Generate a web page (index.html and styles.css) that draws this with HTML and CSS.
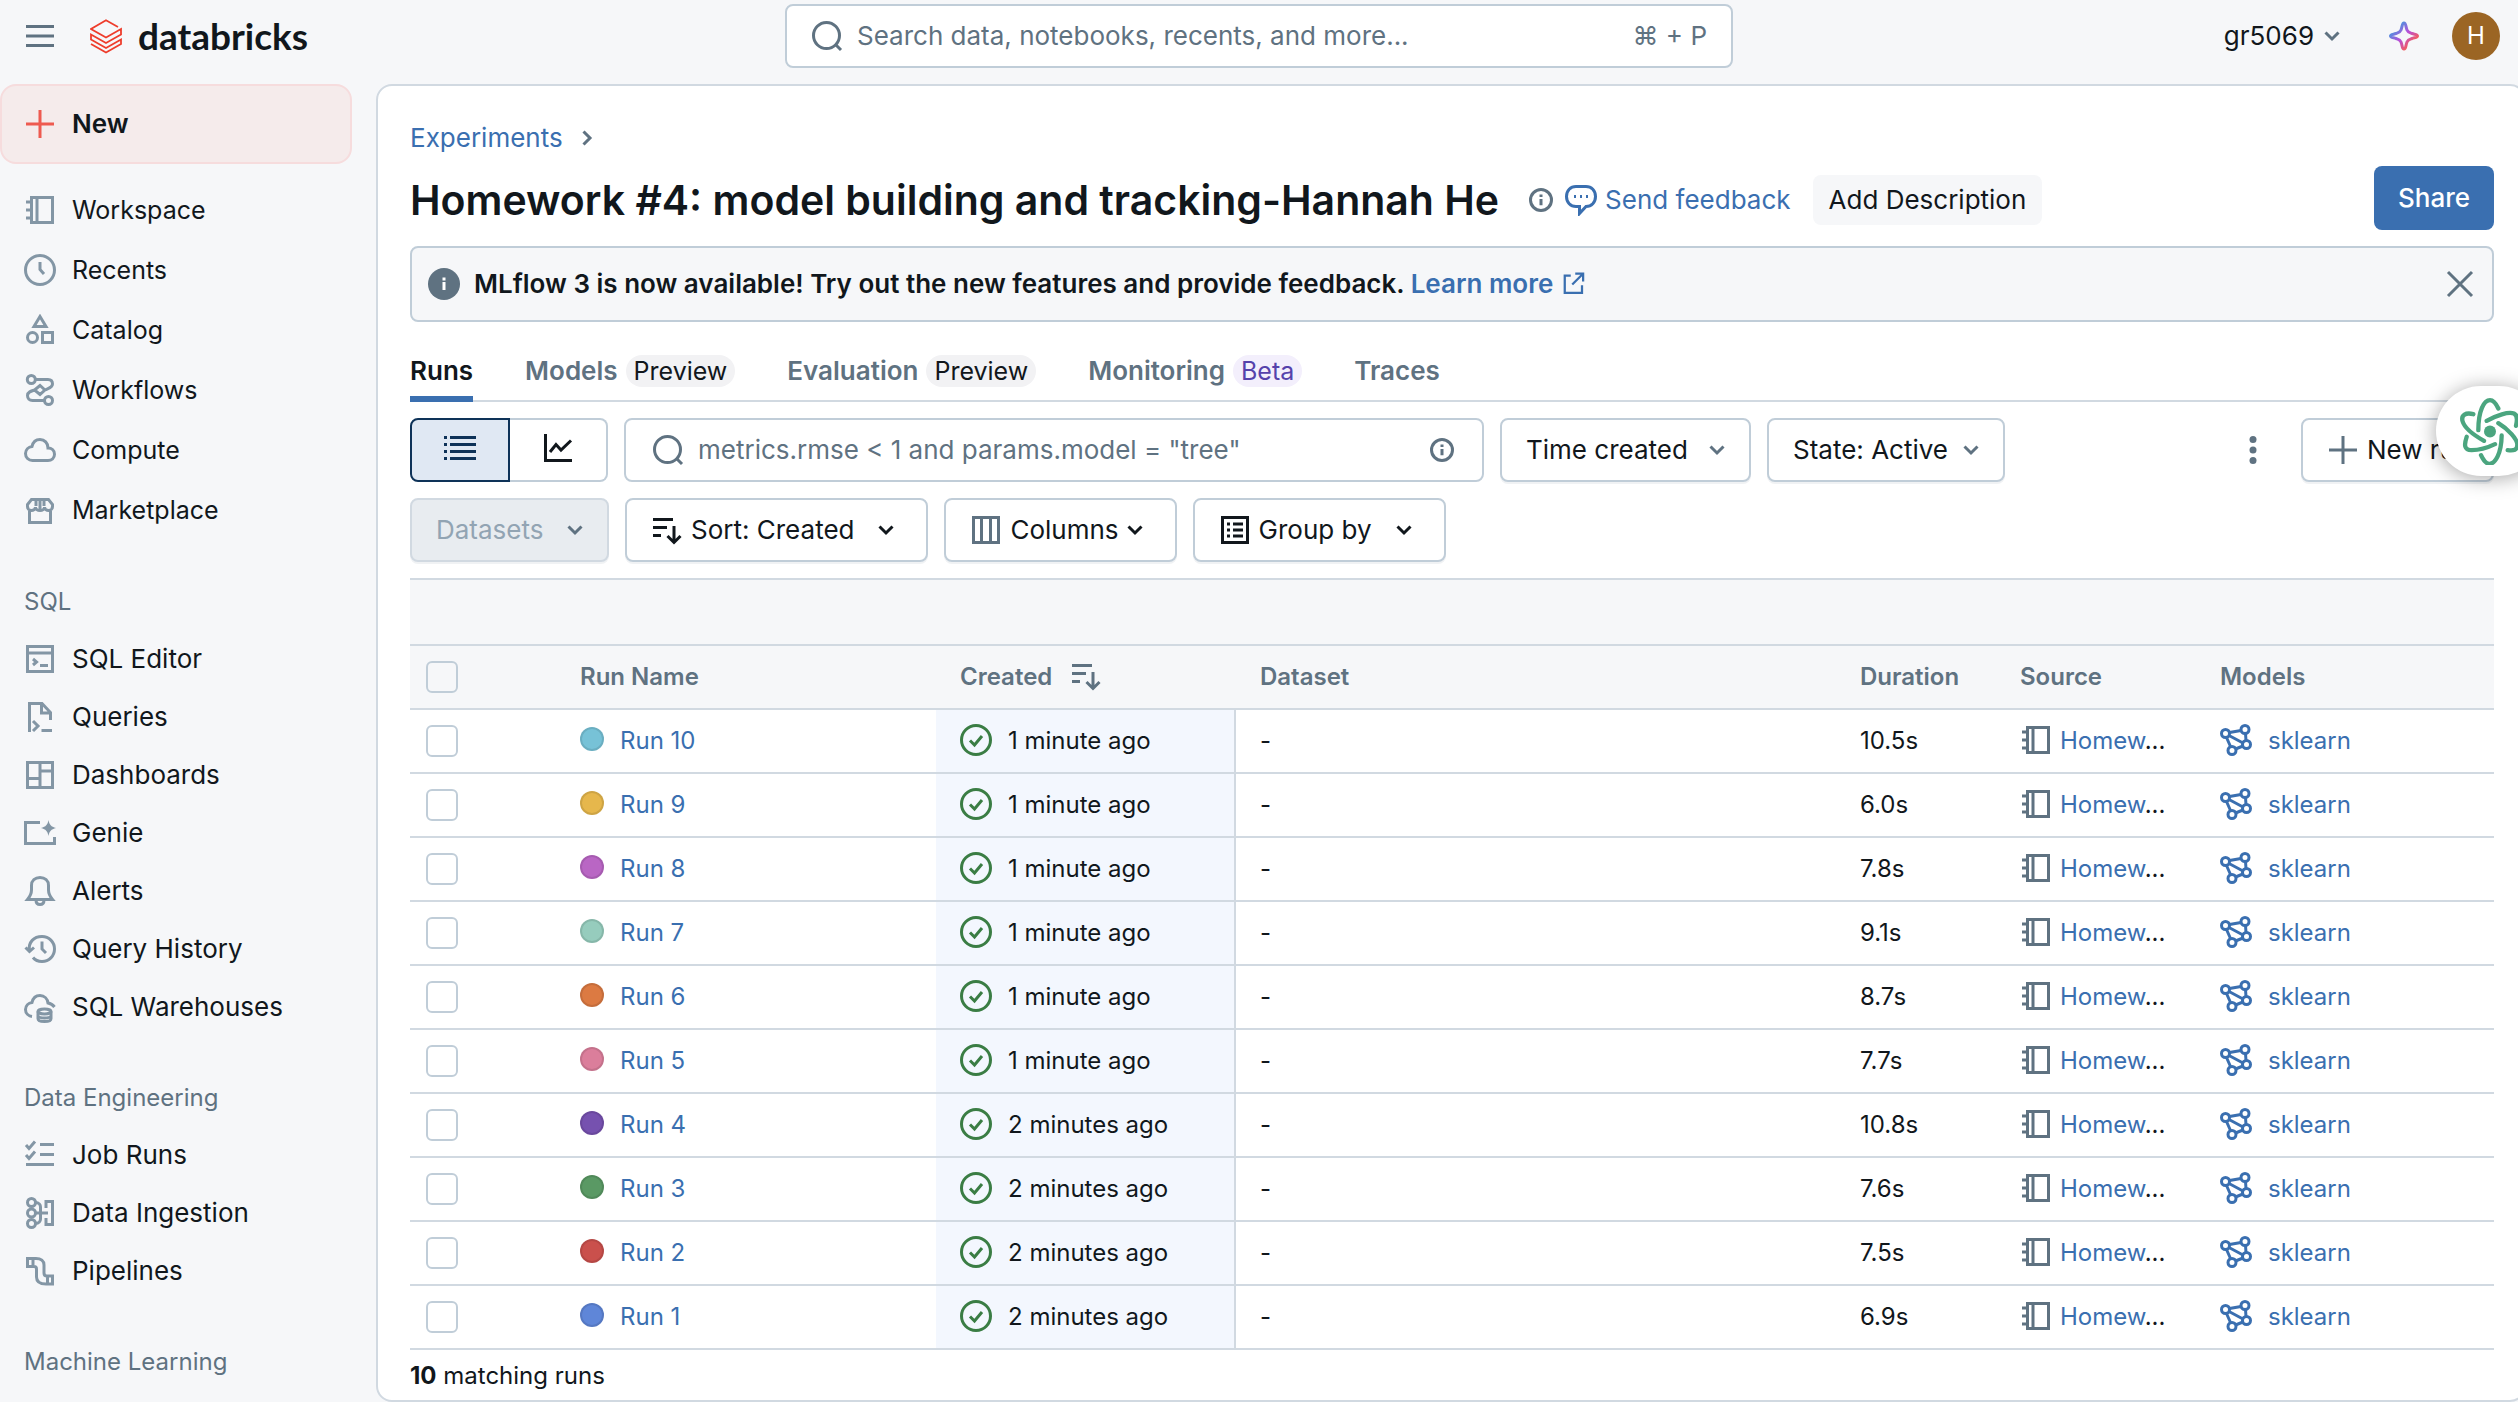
FILE: index.html
```html
<!DOCTYPE html>
<html lang="en">
<head>
<meta charset="utf-8">
<title>Homework #4: model building and tracking-Hannah He - Databricks</title>
<meta name="viewport" content="width=device-width, initial-scale=1">
<link rel="stylesheet" href="styles.css">
</head>
<body>
<svg class="sprite" aria-hidden="true">
  <defs>
    <linearGradient id="spark-gradient" x1="0" y1="0" x2="1" y2="1">
      <stop offset="0.15" stop-color="#4299e0"/><stop offset="0.5" stop-color="#b84fd8"/><stop offset="0.85" stop-color="#ff5f46"/>
    </linearGradient>
  </defs>
  <symbol id="i-menu" viewBox="0 0 32 32"><path d="M2 6.500H30M2 16H30M2 25.500H30"/></symbol>
  <symbol id="i-plus" viewBox="0 0 32 32"><path d="M16 2V30M2 16H30"/></symbol>
  <symbol id="i-notebook" viewBox="0 0 32 32"><path d="M7.500 3.500H28.500V28.500H7.500ZM13 3.500V28.500M2 8H7M2 16H7M2 24H7"/></symbol>
  <symbol id="i-clock" viewBox="0 0 32 32"><circle cx="16" cy="16" r="14.500"/><path d="M16 8V15.500L20 20"/></symbol>
  <symbol id="i-shapes" viewBox="0 0 32 32"><path d="M16 2.500L22 12.500H10Z"/><circle cx="8.500" cy="23.500" r="5"/><path d="M18.500 18.500H28.500V28.500H18.500Z"/></symbol>
  <symbol id="i-flow" viewBox="0 0 32 32"><circle cx="7.300" cy="5.500" r="4"/><circle cx="24.500" cy="26.500" r="4"/><path d="M11.500 5.500H24C27.500 5.500 28.500 8 28.500 10C28.500 13.500 25 14 21 16L16 20.500L10.500 16L16 11.500L21 16M10.500 16C7 17 3.500 18 3.500 21.500C3.500 24.500 5.500 26.500 8.500 26.500H20.500"/></symbol>
  <symbol id="i-cloud" viewBox="0 0 32 32"><path d="M8 12.500C9 8 12 5.500 16 5.500C20.500 5.500 24 9 24 14C27.500 14 30.500 16.500 30.500 20.200C30.500 24 27.500 26.500 24 26.500H8.500C4.500 26.500 1.500 23.500 1.500 19.500C1.500 15.500 4.500 13 8 12.500Z"/></symbol>
  <symbol id="i-store" viewBox="0 0 32 32"><path d="M7.500 5.500H24.500L28.500 10.500V12.500C28.500 15 26.500 16.500 24.700 16.500C22.500 16.500 20.500 15 20.500 13C20.500 15 18.500 16.500 16 16.500C13.500 16.500 11.500 15 11.500 13C11.500 15 9.500 16.500 7.300 16.500C5.500 16.500 3.500 15 3.500 12.500V10.500ZM12 6V12M20 6V12M16 6V15M5.500 17V28.500H26.500V17"/></symbol>
  <symbol id="i-sqleditor" viewBox="0 0 32 32"><path d="M3.500 3.500H28.500V28.500H3.500ZM3.500 10H28.500M9 16L12.500 19L9 22M16 22.500H24"/></symbol>
  <symbol id="i-query" viewBox="0 0 32 32"><path d="M5.500 31V2.500H18L26.500 11.500V19M17.500 2.500V12H26.500M9 20L14 25L9 30M17.500 29.500H28"/></symbol>
  <symbol id="i-dashboard" viewBox="0 0 32 32"><path d="M3.500 3.500H28.500V28.500H3.500ZM16 3.500V28.500M16 12H28.500M3.500 19.500H16"/></symbol>
  <symbol id="i-genie" viewBox="0 0 32 32"><path d="M16 5.500H1.500V26.500H30.500V20"/><path class="solid" d="M24.500 3C25.500 8 27 9.500 32 11C27 12.500 25.500 14 24.500 19C23.500 14 22 12.500 17 11C22 9.500 23.500 8 24.500 3Z"/></symbol>
  <symbol id="i-bell" viewBox="0 0 32 32"><path d="M3.500 24.500C6 21.500 7.500 19 7.500 15V10.500C7.500 5.500 11 2.500 16 2.500C21 2.500 24.500 5.500 24.500 10.500V15C24.500 19 26 21.500 28.500 24.500ZM12 25C12 28 13.500 29.500 16 29.500C18.500 29.500 20 28 20 25"/></symbol>
  <symbol id="i-history" viewBox="0 0 32 32"><path d="M5.500 18C4 9 10 3.500 18 3.500C25 3.500 30.500 9 30.500 16C30.500 23 25 28.500 18 28.500C14 28.500 11 27 9 24.500M1.500 14.500L5.500 18.500L10 14.500M18 8.500V16L22 20"/></symbol>
  <symbol id="i-warehouse" viewBox="0 0 32 32"><path d="M8 25.500C4.500 25 1.500 22.500 1.500 18.500C1.500 14.500 4.500 12 8 11.500C9 7 12 4.500 16 4.500C20.500 4.500 23.500 8 24 12C27 12.500 29 14 30.500 16"/><ellipse cx="20.500" cy="20.500" rx="6.500" ry="2.500"/><path d="M14 20.500V27.500C14 31.500 27 31.500 27 27.500V20.500M14 25C15 27.500 26 27.500 27 25"/></symbol>
  <symbol id="i-jobs" viewBox="0 0 32 32"><path d="M2 6L5 9.500L11 2.500M2 16L5 19.500L11 12.500M16 5.500H30M16 15.500H30M2 25.500H30"/></symbol>
  <symbol id="i-ingest" viewBox="0 0 32 32"><circle cx="7.500" cy="5.500" r="4"/><circle cx="7.500" cy="16" r="4"/><circle cx="7.500" cy="26.500" r="4"/><path d="M11.500 5.500C15 5.500 16.500 8 16.500 10V22C16.500 24 15 26.500 11.500 26.500M11.500 16H24M22 11V4.500H28.500V27.500H22V21"/></symbol>
  <symbol id="i-pipeline" viewBox="0 0 32 32"><path d="M3.500 3.500H12C17 3.500 20 6 20 10V18C20 20 21 21 23 21H28.500V29H22C16.500 29 12.500 27 12.500 22V14C12.500 12 11.500 11.500 10 11.500H3.500ZM9 4V11.500M23.500 21V29"/></symbol>
  <symbol id="i-search" viewBox="0 0 32 32"><circle cx="15.500" cy="15.500" r="13"/><path d="M24.500 24.500L30 30"/></symbol>
  <symbol id="i-down" viewBox="0 0 16 16"><path d="M1.500 4.500L8 11L14.500 4.500"/></symbol>
  <symbol id="i-right" viewBox="0 0 16 16"><path d="M4.500 1.500L11 8L4.500 14.500"/></symbol>
  <symbol id="i-info" viewBox="0 0 32 32"><circle cx="16" cy="16" r="14"/><path d="M16 14.500V23M16 8.500V12"/></symbol>
  <symbol id="i-infofill" viewBox="0 0 32 32"><circle class="solid" cx="16" cy="16" r="16"/><path class="knock" d="M16 14V22M16 9.500V12.500"/></symbol>
  <symbol id="i-speech" viewBox="0 0 32 32"><path d="M11 2.500H21C26.500 2.500 30.500 6.500 30.500 12.500C30.500 18.500 26.500 22.500 21 22.500L14.500 29.500V22.500H11C5.500 22.500 1.500 18.500 1.500 12.500C1.500 6.500 5.500 2.500 11 2.500Z"/><path d="M9 12.500H11M15 12.500H17M21 12.500H23"/></symbol>
  <symbol id="i-external" viewBox="0 0 32 32"><path d="M13 6H5V29H28V19M19 3.500H29.500V14M29 4L15 18"/></symbol>
  <symbol id="i-close" viewBox="0 0 32 32"><path d="M4 4L28 28M28 4L4 28"/></symbol>
  <symbol id="i-list" viewBox="0 0 32 32"><path d="M0 3.500H3M6 3.500H32M0 10.500H3M6 10.500H32M0 17.500H3M6 17.500H32M0 24.500H3M6 24.500H32"/></symbol>
  <symbol id="i-chart" viewBox="0 0 32 32"><path d="M3.500 0V26.500H30M8 18L14 10.500L19 16L29 6.500"/></symbol>
  <symbol id="i-sort" viewBox="0 0 32 32"><path d="M2 5.500H22M2 13.500H16M2 21.500H10M23 12V28M16.500 22L23 28.500L29.500 22"/></symbol>
  <symbol id="i-columns" viewBox="0 0 32 32"><path d="M3.500 3.500H28.500V28.500H3.500ZM11.500 3.500V28.500M20.500 3.500V28.500"/></symbol>
  <symbol id="i-group" viewBox="0 0 32 32"><path d="M3.500 3.500H28.500V28.500H3.500ZM8 10H11M14 10H24M8 16H11M14 16H24M8 22H11M14 22H24"/></symbol>
  <symbol id="i-check" viewBox="0 0 32 32"><circle cx="16" cy="16" r="14.500"/><path d="M10 16.500L14.500 21L22 12"/></symbol>
  <symbol id="i-model" viewBox="0 0 32 32"><circle cx="5.500" cy="9.500" r="4"/><circle cx="25" cy="5.500" r="4"/><circle cx="26.500" cy="20.500" r="4"/><circle cx="12" cy="26.500" r="4"/><path d="M9.500 8.500L21 6.500M25.500 9.500L26 16.500M9 11.500L23 19M6.500 13.500L10.500 22.500M15.500 25L23 22"/></symbol>
  <symbol id="i-kebab" viewBox="0 0 32 32"><circle class="solid" cx="16" cy="5.500" r="3.500"/><circle class="solid" cx="16" cy="16" r="3.500"/><circle class="solid" cx="16" cy="26.500" r="3.500"/></symbol>
</svg>

<header class="topbar">
  <div class="topbar-start">
    <button class="plain" aria-label="Toggle navigation"><svg class="icon"><use href="#i-menu"/></svg></button>
    <a class="brand" href="#">
      <svg class="brand-mark" viewBox="0 0 32 35"><path d="M28 8L16 1.200L1 10L16 18.500L31 10V15.500L16 24L1 15.500V20.500L16 29L31 20.500V25L16 33.500L1 25"/></svg>
      <span>databricks</span>
    </a>
  </div>
  <label class="global-search">
    <svg class="icon"><use href="#i-search"/></svg>
    <input type="search" placeholder="Search data, notebooks, recents, and more..." aria-label="Search">
    <kbd>⌘ + P</kbd>
  </label>
  <div class="topbar-end">
    <button class="plain workspace">gr5069<svg class="chev"><use href="#i-down"/></svg></button>
    <button class="plain" aria-label="Assistant"><svg class="spark" viewBox="0 0 32 32"><path d="M16 3C18 3 17.500 6 19 10C20 12.500 21 12.500 24 13.500C27 14.500 29.500 14.500 29.500 16C29.500 17.500 27 17.500 24 18.500C21 19.500 20 19.500 19 22C17.500 26 18 29 16 29C14 29 14.500 26 13 22C12 19.500 11 19.500 8 18.500C5 17.500 2.500 17.500 2.500 16C2.500 14.500 5 14.500 8 13.500C11 12.500 12 12.500 13 10C14.500 6 14 3 16 3Z"/></svg></button>
    <button class="avatar" aria-label="Account">H</button>
  </div>
</header>

<div class="shell">
  <nav class="sidebar" aria-label="Main">
    <button class="new"><svg class="icon"><use href="#i-plus"/></svg>New</button>
    <ul class="nav nav-main">
      <li><a href="#"><svg class="icon"><use href="#i-notebook"/></svg>Workspace</a></li>
      <li><a href="#"><svg class="icon"><use href="#i-clock"/></svg>Recents</a></li>
      <li><a href="#"><svg class="icon"><use href="#i-shapes"/></svg>Catalog</a></li>
      <li><a href="#"><svg class="icon"><use href="#i-flow"/></svg>Workflows</a></li>
      <li><a href="#"><svg class="icon"><use href="#i-cloud"/></svg>Compute</a></li>
      <li><a href="#"><svg class="icon"><use href="#i-store"/></svg>Marketplace</a></li>
    </ul>
    <h2>SQL</h2>
    <ul class="nav">
      <li><a href="#"><svg class="icon"><use href="#i-sqleditor"/></svg>SQL Editor</a></li>
      <li><a href="#"><svg class="icon"><use href="#i-query"/></svg>Queries</a></li>
      <li><a href="#"><svg class="icon"><use href="#i-dashboard"/></svg>Dashboards</a></li>
      <li><a href="#"><svg class="icon"><use href="#i-genie"/></svg>Genie</a></li>
      <li><a href="#"><svg class="icon"><use href="#i-bell"/></svg>Alerts</a></li>
      <li><a href="#"><svg class="icon"><use href="#i-history"/></svg>Query History</a></li>
      <li><a href="#"><svg class="icon"><use href="#i-warehouse"/></svg>SQL Warehouses</a></li>
    </ul>
    <h2>Data Engineering</h2>
    <ul class="nav">
      <li><a href="#"><svg class="icon"><use href="#i-jobs"/></svg>Job Runs</a></li>
      <li><a href="#"><svg class="icon"><use href="#i-ingest"/></svg>Data Ingestion</a></li>
      <li><a href="#"><svg class="icon"><use href="#i-pipeline"/></svg>Pipelines</a></li>
    </ul>
    <h2>Machine Learning</h2>
  </nav>

  <main class="page">
    <div class="breadcrumb"><a href="#">Experiments</a><svg class="chev"><use href="#i-right"/></svg></div>
    <div class="title-row">
      <div class="title-main">
        <h1>Homework #4: model building and tracking-Hannah He</h1>
        <button class="plain info" aria-label="Experiment details"><svg class="icon-s"><use href="#i-info"/></svg></button>
        <a class="feedback" href="#"><svg class="icon"><use href="#i-speech"/></svg>Send feedback</a>
        <button class="describe">Add Description</button>
      </div>
      <button class="share">Share</button>
    </div>

    <div class="banner" role="status">
      <svg class="icon banner-info"><use href="#i-infofill"/></svg>
      <p>MLflow 3 is now available! Try out the new features and provide feedback. <a href="#">Learn more<svg class="icon-s"><use href="#i-external"/></svg></a></p>
      <button class="plain close" aria-label="Close"><svg class="icon"><use href="#i-close"/></svg></button>
    </div>

    <nav class="tabs" aria-label="Experiment views">
      <a class="active" href="#" aria-current="page">Runs</a>
      <a href="#">Models<span class="pill">Preview</span></a>
      <a href="#">Evaluation<span class="pill">Preview</span></a>
      <a href="#">Monitoring<span class="pill beta">Beta</span></a>
      <a href="#">Traces</a>
    </nav>

    <div class="toolbar">
      <div class="segment" role="radiogroup" aria-label="View">
        <label><input type="radio" name="view" checked aria-label="Table view"><svg class="icon"><use href="#i-list"/></svg></label>
        <label><input type="radio" name="view" aria-label="Chart view"><svg class="icon"><use href="#i-chart"/></svg></label>
      </div>
      <label class="filter">
        <svg class="icon"><use href="#i-search"/></svg>
        <input type="text" placeholder='metrics.rmse &lt; 1 and params.model = "tree"' aria-label="Filter runs">
        <svg class="icon-s"><use href="#i-info"/></svg>
      </label>
      <div class="select time"><select aria-label="Time"><option>Time created</option></select><svg class="chev"><use href="#i-down"/></svg></div>
      <div class="select state"><select aria-label="State"><option>State: Active</option></select><svg class="chev"><use href="#i-down"/></svg></div>
      <button class="plain kebab" aria-label="More options"><svg class="icon"><use href="#i-kebab"/></svg></button>
      <button class="btn new-run"><svg class="icon"><use href="#i-plus"/></svg>New run</button>
    </div>
    <div class="toolbar">
      <div class="select datasets"><select aria-label="Datasets" disabled><option>Datasets</option></select><svg class="chev"><use href="#i-down"/></svg></div>
      <button class="btn" aria-haspopup="true"><svg class="icon"><use href="#i-sort"/></svg>Sort: Created<svg class="chev far"><use href="#i-down"/></svg></button>
      <button class="btn" aria-haspopup="true"><svg class="icon grey"><use href="#i-columns"/></svg>Columns<svg class="chev"><use href="#i-down"/></svg></button>
      <button class="btn" aria-haspopup="true"><svg class="icon"><use href="#i-group"/></svg>Group by<svg class="chev far"><use href="#i-down"/></svg></button>
    </div>

    <table class="runs">
      <colgroup><col class="c-check"><col class="c-name"><col class="c-created"><col><col class="c-duration"><col class="c-source"><col class="c-models"></colgroup>
      <thead>
        <tr class="group-row"><td colspan="7"></td></tr>
        <tr>
          <th><input type="checkbox" aria-label="Select all runs"></th>
          <th>Run Name</th>
          <th>Created<svg class="icon sort-icon"><use href="#i-sort"/></svg></th>
          <th>Dataset</th><th>Duration</th><th>Source</th><th>Models</th>
        </tr>
      </thead>
      <tbody>
        <tr><td><input type="checkbox" aria-label="Select Run 10"></td><td><i class="dot d10"></i><a href="#">Run 10</a></td><td class="created"><svg class="icon"><use href="#i-check"/></svg>1 minute ago</td><td>-</td><td>10.5s</td><td class="source"><svg class="icon"><use href="#i-notebook"/></svg><a href="#">Homew</a>...</td><td class="model"><svg class="icon"><use href="#i-model"/></svg><a href="#">sklearn</a></td></tr>
        <tr><td><input type="checkbox" aria-label="Select Run 9"></td><td><i class="dot d9"></i><a href="#">Run 9</a></td><td class="created"><svg class="icon"><use href="#i-check"/></svg>1 minute ago</td><td>-</td><td>6.0s</td><td class="source"><svg class="icon"><use href="#i-notebook"/></svg><a href="#">Homew</a>...</td><td class="model"><svg class="icon"><use href="#i-model"/></svg><a href="#">sklearn</a></td></tr>
        <tr><td><input type="checkbox" aria-label="Select Run 8"></td><td><i class="dot d8"></i><a href="#">Run 8</a></td><td class="created"><svg class="icon"><use href="#i-check"/></svg>1 minute ago</td><td>-</td><td>7.8s</td><td class="source"><svg class="icon"><use href="#i-notebook"/></svg><a href="#">Homew</a>...</td><td class="model"><svg class="icon"><use href="#i-model"/></svg><a href="#">sklearn</a></td></tr>
        <tr><td><input type="checkbox" aria-label="Select Run 7"></td><td><i class="dot d7"></i><a href="#">Run 7</a></td><td class="created"><svg class="icon"><use href="#i-check"/></svg>1 minute ago</td><td>-</td><td>9.1s</td><td class="source"><svg class="icon"><use href="#i-notebook"/></svg><a href="#">Homew</a>...</td><td class="model"><svg class="icon"><use href="#i-model"/></svg><a href="#">sklearn</a></td></tr>
        <tr><td><input type="checkbox" aria-label="Select Run 6"></td><td><i class="dot d6"></i><a href="#">Run 6</a></td><td class="created"><svg class="icon"><use href="#i-check"/></svg>1 minute ago</td><td>-</td><td>8.7s</td><td class="source"><svg class="icon"><use href="#i-notebook"/></svg><a href="#">Homew</a>...</td><td class="model"><svg class="icon"><use href="#i-model"/></svg><a href="#">sklearn</a></td></tr>
        <tr><td><input type="checkbox" aria-label="Select Run 5"></td><td><i class="dot d5"></i><a href="#">Run 5</a></td><td class="created"><svg class="icon"><use href="#i-check"/></svg>1 minute ago</td><td>-</td><td>7.7s</td><td class="source"><svg class="icon"><use href="#i-notebook"/></svg><a href="#">Homew</a>...</td><td class="model"><svg class="icon"><use href="#i-model"/></svg><a href="#">sklearn</a></td></tr>
        <tr><td><input type="checkbox" aria-label="Select Run 4"></td><td><i class="dot d4"></i><a href="#">Run 4</a></td><td class="created"><svg class="icon"><use href="#i-check"/></svg>2 minutes ago</td><td>-</td><td>10.8s</td><td class="source"><svg class="icon"><use href="#i-notebook"/></svg><a href="#">Homew</a>...</td><td class="model"><svg class="icon"><use href="#i-model"/></svg><a href="#">sklearn</a></td></tr>
        <tr><td><input type="checkbox" aria-label="Select Run 3"></td><td><i class="dot d3"></i><a href="#">Run 3</a></td><td class="created"><svg class="icon"><use href="#i-check"/></svg>2 minutes ago</td><td>-</td><td>7.6s</td><td class="source"><svg class="icon"><use href="#i-notebook"/></svg><a href="#">Homew</a>...</td><td class="model"><svg class="icon"><use href="#i-model"/></svg><a href="#">sklearn</a></td></tr>
        <tr><td><input type="checkbox" aria-label="Select Run 2"></td><td><i class="dot d2"></i><a href="#">Run 2</a></td><td class="created"><svg class="icon"><use href="#i-check"/></svg>2 minutes ago</td><td>-</td><td>7.5s</td><td class="source"><svg class="icon"><use href="#i-notebook"/></svg><a href="#">Homew</a>...</td><td class="model"><svg class="icon"><use href="#i-model"/></svg><a href="#">sklearn</a></td></tr>
        <tr><td><input type="checkbox" aria-label="Select Run 1"></td><td><i class="dot d1"></i><a href="#">Run 1</a></td><td class="created"><svg class="icon"><use href="#i-check"/></svg>2 minutes ago</td><td>-</td><td>6.9s</td><td class="source"><svg class="icon"><use href="#i-notebook"/></svg><a href="#">Homew</a>...</td><td class="model"><svg class="icon"><use href="#i-model"/></svg><a href="#">sklearn</a></td></tr>
      </tbody>
    </table>
    <p class="count"><b>10</b> matching runs</p>
  </main>
</div>

<button class="assistant" aria-label="Open assistant">
  <svg viewBox="100 82 180 200"><path d="M155 178C155 120 172 88 190 88C200 88 208 98 215 113M140 130C118 124 102 132 108 152C114 172 140 192 172 210M120 198C112 222 112 238 135 238C160 238 180 232 205 220M225 194C224 250 205 279 188 279C178 279 170 268 163 253M180 150C210 133 245 122 262 128C274 134 272 148 268 165M215 157C245 175 272 205 272 222C272 238 262 240 243 238"/><circle cx="190" cy="182" r="18"/></svg>
</button>
</body>
</html>
```
FILE: styles.css
```css
:root {
  --text: #11171c;
  --muted: #5f7281;
  --nav-icon: #8396a5;
  --link: #3a6fb0;
  --surface: #f6f7f9;
  --control: #c0cdd8;
  --line: #d1d9e1;
}

* { box-sizing: border-box; }

body {
  margin: 0;
  height: 100vh;
  display: flex;
  flex-direction: column;
  overflow: hidden;
  background: var(--surface);
  color: var(--text);
  font: 26px/40px Inter, "Liberation Sans", sans-serif;
}

a { color: var(--link); text-decoration: none; }
h1, h2, p, ul { margin: 0; padding: 0; }
ul { list-style: none; }
button, input, select, kbd { font: inherit; color: inherit; }

svg { flex: none; fill: none; stroke: currentColor; stroke-width: 3; }
.solid { fill: currentColor; stroke: none; }
.knock { stroke: #fff; }
.sprite { position: absolute; width: 0; height: 0; }
.icon { width: 32px; height: 32px; }
.icon-s { width: 24px; height: 24px; stroke-width: 4; }
.chev { width: 16px; height: 16px; color: var(--muted); }
.plain { display: flex; align-items: center; border: 0; padding: 0; background: none; }

/* Top bar */
.topbar {
  display: grid;
  grid-template-columns: 1fr 948px 1fr;
  align-items: center;
  height: 84px;
  padding: 0 18px 12px;
}
.topbar-start, .topbar-end { display: flex; align-items: center; }
.topbar-start { gap: 34px; padding-left: 6px; color: var(--muted); }
.topbar-end { justify-content: flex-end; }
.brand {
  display: flex;
  align-items: center;
  gap: 16px;
  color: var(--text);
  font: 700 37px/48px Lato, sans-serif;
}
.brand-mark { width: 32px; height: 35px; color: #ee3d2c; stroke-width: 1.8; }
.global-search, .filter {
  display: flex;
  align-items: center;
  height: 64px;
  padding: 0 24px;
  background: #fff;
  border: 2px solid var(--control);
  border-radius: 8px;
  color: var(--muted);
}
.global-search { gap: 14px; }
.global-search input, .filter input {
  flex: 1;
  min-width: 0;
  padding: 0;
  border: 0;
  outline: 0;
  background: none;
}
input::placeholder { color: var(--muted); opacity: 1; }
.workspace { gap: 10px; margin-right: 48px; }
.spark { width: 32px; height: 32px; margin-right: 32px; }
.spark path { stroke: url(#spark-gradient); }
.avatar {
  width: 48px;
  height: 48px;
  padding: 0;
  border: 0;
  border-radius: 50%;
  background: #9b6524;
  color: #fff;
  font-size: 24px;
}

/* Sidebar */
.shell { display: flex; flex: 1; min-height: 0; }
.sidebar { width: 376px; flex: none; overflow: hidden; }
.new {
  display: flex;
  align-items: center;
  gap: 16px;
  width: 352px;
  height: 80px;
  margin-bottom: 16px;
  padding: 0 22px;
  border: 2px solid #f6dcdd;
  border-radius: 16px;
  background: #f5ebeb;
  font-weight: 600;
}
.new .icon { color: #ee5a50; }
.nav a {
  display: flex;
  align-items: center;
  gap: 16px;
  height: 58px;
  padding-left: 24px;
  color: var(--text);
}
.nav-main a { height: 60px; font-size: 25px; }
.nav .icon { color: var(--nav-icon); }
.sidebar h2 {
  margin: 42px 0 8px 24px;
  color: var(--muted);
  font-size: 24px;
  font-weight: 400;
}

/* Page */
.page {
  flex: 1;
  min-width: 0;
  margin-right: -8px;
  padding: 32px 30px 0 32px;
  background: #fff;
  border: 2px solid var(--line);
  border-radius: 16px;
}
.breadcrumb { display: flex; align-items: center; gap: 16px; }
.title-row { display: flex; align-items: center; height: 64px; margin: 8px 0 16px; }
.title-main { display: flex; align-items: center; padding-top: 4px; }
h1 { font-size: 41px; line-height: 56px; font-weight: 600; white-space: nowrap; }
.info { margin: 0 12px 0 30px; color: var(--muted); }
.feedback { display: flex; align-items: center; gap: 8px; }
.describe {
  height: 50px;
  margin-left: 22px;
  padding: 0 16px;
  border: 0;
  border-radius: 8px;
  background: var(--surface);
}
.share {
  height: 64px;
  margin-left: auto;
  padding: 0 24px;
  border: 0;
  border-radius: 8px;
  background: var(--link);
  color: #fff;
  font-weight: 500;
}

.banner {
  display: flex;
  align-items: center;
  gap: 14px;
  height: 76px;
  padding: 0 16px;
  background: var(--surface);
  border: 2px solid var(--control);
  border-radius: 8px;
  font-weight: 600;
}
.banner-info { color: var(--muted); }
.banner a .icon-s { margin-left: 8px; vertical-align: -2px; stroke-width: 3; }
.close { margin-left: auto; color: var(--muted); }

.tabs {
  display: flex;
  gap: 52px;
  height: 60px;
  margin: 20px 0 16px;
  border-bottom: 2px solid var(--line);
}
.tabs a {
  display: flex;
  align-items: center;
  gap: 8px;
  height: 60px;
  padding-top: 4px;
  border-bottom: 6px solid transparent;
  color: var(--muted);
  font-weight: 600;
}
.tabs .active { color: var(--text); border-color: var(--link); }
.pill {
  padding: 0 8px;
  border-radius: 16px;
  background: #f2f2f4;
  color: var(--text);
  font-size: 25px;
  font-weight: 400;
  line-height: 32px;
}
.beta { background: #f3effc; color: #5542ab; }

/* Toolbars */
.toolbar { display: flex; gap: 16px; margin-bottom: 16px; }
.segment { display: flex; width: 198px; height: 64px; }
.segment label {
  display: flex;
  flex: 1;
  align-items: center;
  justify-content: center;
  border: 2px solid var(--control);
  border-left: 0;
  border-radius: 0 8px 8px 0;
}
.segment label:has(input:checked) {
  border: 2px solid #0e3258;
  border-radius: 8px 0 0 8px;
  background: #e0e8f3;
  color: #0e3258;
}
.segment input { appearance: none; width: 0; margin: 0; }
.filter { gap: 14px; width: 860px; padding: 0 28px 0 26px; }
.select { position: relative; }
.select select, .btn {
  height: 64px;
  background: #fff;
  border: 2px solid var(--control);
  border-radius: 8px;
  box-shadow: 0 2px 0 #f0f2f4;
}
.select select { appearance: none; width: 100%; padding: 0 24px; opacity: 1; }
.select .chev { position: absolute; top: 24px; right: 26px; pointer-events: none; }
.time { width: 251px; }
.state { width: 238px; }
.datasets { width: 199px; }
.datasets select { background: #e8ecf0; border-color: var(--line); color: #92a4b3; }
.btn { display: flex; align-items: center; gap: 8px; padding: 0 24px; white-space: nowrap; }
.btn .chev { margin-right: 8px; color: var(--text); }
.btn .far { margin-left: 16px; }
.grey { color: var(--muted); }
.kebab { margin-left: auto; color: var(--muted); }
.new-run { width: 193px; margin-left: 16px; }
.new-run .icon { color: var(--muted); }

/* Runs table */
.runs {
  width: 100%;
  table-layout: fixed;
  border-spacing: 0;
  border-top: 2px solid var(--line);
}
.c-check { width: 146px; }
.c-name { width: 380px; }
.c-created { width: 300px; }
.c-duration { width: 160px; }
.c-source { width: 200px; }
.c-models { width: 298px; }
.runs th, .runs td {
  height: 64px;
  padding: 0 0 0 24px;
  border-bottom: 2px solid var(--line);
  font-size: 24px;
  text-align: left;
  white-space: nowrap;
}
.runs tr > :first-child { padding-left: 16px; }
.runs thead { background: var(--surface); }
.runs .group-row td { height: 66px; }
.runs th { color: var(--muted); font-weight: 600; }
.runs svg { vertical-align: -7px; }
.runs .sort-icon { margin-left: 18px; }
.runs input {
  display: block;
  appearance: none;
  width: 32px;
  height: 32px;
  margin: 0;
  border: 2px solid var(--control);
  border-radius: 6px;
}
.dot {
  display: inline-block;
  width: 24px;
  height: 24px;
  margin-right: 16px;
  border: 2px solid rgba(0, 0, 0, 0.1);
  border-radius: 50%;
  vertical-align: -2px;
}
.d10 { background: #77c2d7; }
.d9 { background: #e6b74c; }
.d8 { background: #b966c4; }
.d7 { background: #96ccbd; }
.d6 { background: #dc7a42; }
.d5 { background: #db7e9b; }
.d4 { background: #7651af; }
.d3 { background: #5a9964; }
.d2 { background: #ca504c; }
.d1 { background: #5f86d8; }
.runs .created { background: #f3f7fe; border-right: 2px solid var(--line); }
.created .icon { margin-right: 16px; color: #3a7d44; }
.source .icon { margin-right: 8px; color: var(--muted); }
.model .icon { margin-right: 16px; color: var(--link); }
.count { padding-top: 6px; font-size: 24px; }

/* Floating assistant */
.assistant {
  position: fixed;
  top: 386px;
  right: -26px;
  display: flex;
  align-items: center;
  justify-content: center;
  width: 108px;
  height: 90px;
  padding: 0;
  border: 0;
  border-radius: 45px;
  background: #fff;
  box-shadow: 0 2px 20px rgba(0, 0, 0, 0.35);
  color: #4ba57f;
}
.assistant svg { width: 60px; height: 67px; stroke-width: 13; stroke-linecap: round; }
.assistant circle { fill: currentColor; stroke: none; }
```
